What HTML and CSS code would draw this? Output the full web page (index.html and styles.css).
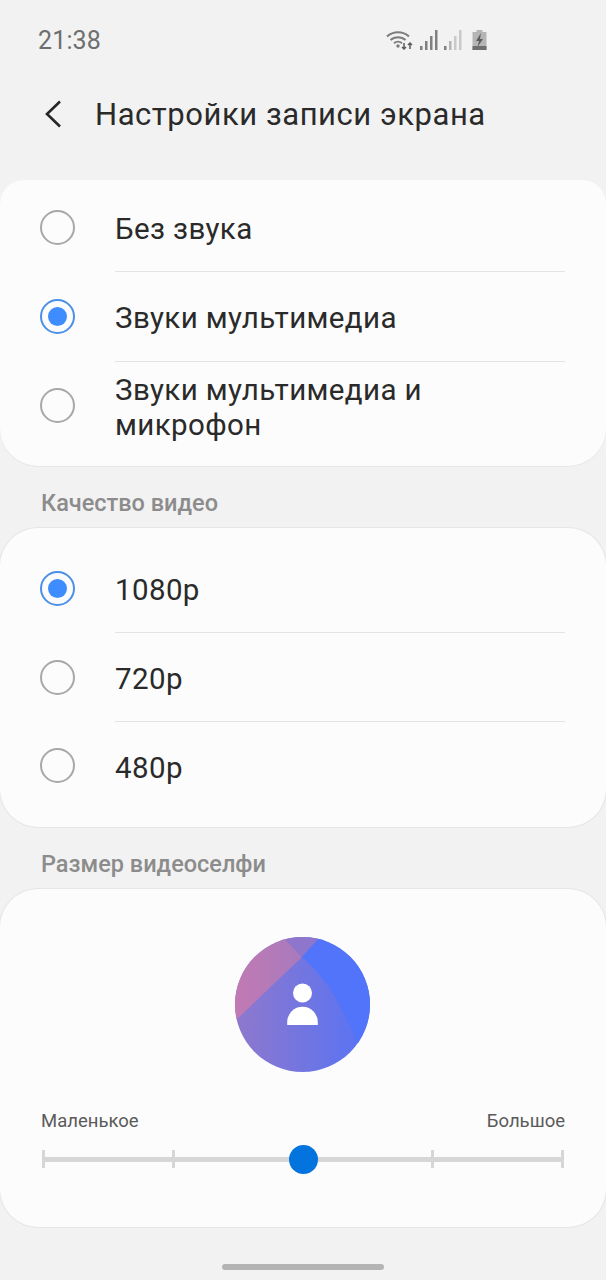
FILE: index.html
```html
<!DOCTYPE html>
<html lang="ru">
<head>
<meta charset="utf-8">
<title>Настройки записи экрана</title>
<link rel="stylesheet" href="styles.css">
</head>
<body>
<div class="status">
  <span class="time">21:38</span>
  <div class="status-icons">
    <svg class="i-wifi" width="28" height="20" viewBox="0 0 28 20" fill="none" stroke="#7d7d7d">
      <path d="M1 6.500C7 .8 17 .8 23 6.500" stroke-width="2"/>
      <path d="M4.500 10C8.500 6.300 15.500 6.300 19.500 10" stroke-width="2"/>
      <path d="M8 13.200C10.300 11.200 13.700 11.200 16 13.200" stroke-width="2"/>
      <circle cx="12" cy="16" r="1.700" fill="#7d7d7d" stroke="none"/>
      <path d="M18 13v6M16 17l2 2 2-2M24 19v-6M22 15l2-2 2 2" stroke="#5c5c5c" stroke-width="1.500"/>
    </svg>
    <svg class="i-sig" width="20" height="22" viewBox="0 0 20 22">
      <rect x="1" y="17" width="2.500" height="4" fill="#808080"/>
      <rect x="6" y="12" width="2.500" height="9" fill="#808080"/>
      <rect x="11" y="7" width="2.500" height="14" fill="#808080"/>
      <rect x="16" y="1" width="2.500" height="20" fill="#808080"/>
    </svg>
    <svg class="i-sig" width="20" height="22" viewBox="0 0 20 22">
      <rect x="1" y="17" width="2.500" height="4" fill="#808080"/>
      <rect x="6" y="12" width="2.500" height="9" fill="#b5b5b5"/>
      <rect x="11" y="7" width="2.500" height="14" fill="#c9c9c9"/>
      <rect x="16" y="1" width="2.500" height="20" fill="#c9c9c9"/>
    </svg>
    <svg class="i-bat" width="15" height="20" viewBox="0 0 15 20">
      <path d="M4.500 0h6v2h4v18H.500V2h4z" fill="#b5b5b5"/>
      <rect x=".5" y="16" width="14" height="4" fill="#6f6f6f"/>
      <path d="M9 3 4 11h3l-1.500 6L11 9H8z" fill="#5c5c5c"/>
    </svg>
  </div>
</div>
<header class="head">
  <svg class="back" width="18" height="28" viewBox="0 0 18 28" fill="none" stroke="#262626" stroke-width="2.600"><path d="M16 1.500 3 14l13 12.500"/></svg>
  <h1 class="title">Настройки записи экрана</h1>
</header>
<main class="content">
  <section class="card card-first">
    <div class="row row-a"><span class="radio"></span><span class="label">Без звука</span></div>
    <div class="row row-b"><span class="radio on"></span><span class="label">Звуки мультимедиа</span></div>
    <div class="row row-c"><span class="radio"></span><span class="label">Звуки мультимедиа и микрофон</span></div>
  </section>
  <h2 class="section">Качество видео</h2>
  <section class="card">
    <div class="row row-d"><span class="radio on"></span><span class="label">1080p</span></div>
    <div class="row row-b"><span class="radio"></span><span class="label">720p</span></div>
    <div class="row row-e"><span class="radio"></span><span class="label">480p</span></div>
  </section>
  <h2 class="section">Размер видеоселфи</h2>
  <section class="card selfie">
    <svg class="avatar" width="135" height="135" viewBox="0 0 135 135">
      <defs>
        <clipPath id="disc"><circle cx="67.500" cy="67.500" r="67.500"/></clipPath>
        <linearGradient id="base" x1="0" y1="0" x2="1" y2="0">
          <stop offset="0" stop-color="#8f78cc"/>
          <stop offset="1" stop-color="#5673f5"/>
        </linearGradient>
        <linearGradient id="pink" x1="0" y1="0" x2="1" y2="0">
          <stop offset="0" stop-color="#c27ab3"/>
          <stop offset="1" stop-color="#a87abd"/>
        </linearGradient>
      </defs>
      <g clip-path="url(#disc)">
        <rect width="135" height="135" fill="url(#base)"/>
        <path d="M0 84 67 20 48 0H0z" fill="url(#pink)"/>
        <path d="M48 0 67 20 85 0z" fill="#8d76cb"/>
        <path d="M85 0 67 20C91 41 108 70 121 103L135 125V0z" fill="#5274fb"/>
      </g>
      <circle cx="67.500" cy="56" r="9.500" fill="#fff"/>
      <path d="M52.200 88V85A15.300 15.300 0 0 1 82.800 85V88z" fill="#fff"/>
    </svg>
    <div class="size-labels"><span>Маленькое</span><span>Большое</span></div>
    <div class="slider">
      <span class="tick"></span><span class="tick"></span><span class="gap"></span><span class="tick"></span><span class="tick"></span>
      <span class="thumb"></span>
    </div>
  </section>
</main>
<div class="home-bar"></div>
</body>
</html>
```
FILE: styles.css
```css
* { box-sizing: border-box; }
html, body { margin: 0; padding: 0; }
body {
  width: 606px;
  height: 1280px;
  background: #f2f2f2;
  font-family: Roboto, "Noto Sans", sans-serif;
  color: #2a2a2a;
  overflow: hidden;
  display: flex;
  flex-direction: column;
}
.status {
  height: 80px;
  padding: 0 0 0 38px;
  display: flex;
  align-items: center;
  flex: none;
}
.time { font-size: 25px; color: #6e6e6e; letter-spacing: .15px; }
.status-icons {
  margin-left: 285px;
  display: flex;
  align-items: center;
  gap: 4px;
}
.i-wifi { margin-right: 1px; }
.i-bat { margin-left: 5px; }
.head {
  height: 100px;
  padding: 0 0 32px 44px;
  display: flex;
  align-items: center;
  gap: 33px;
  flex: none;
}
.back { flex: none; }
.title { margin: 0; font-size: 31px; font-weight: 400; color: #2a2a2a; letter-spacing: .55px; white-space: nowrap; }
.content { display: flex; flex-direction: column; }
.card {
  background: #fcfcfc;
  border-radius: 38px;
  box-shadow: 0 0 0 1px #e6e6e6;
}
.card-first { border-radius: 24px 24px 38px 38px; box-shadow: 0 1px 0 #e6e6e6; }
.section {
  margin: 0;
  height: 62px;
  padding: 23px 0 0 41px;
  font-size: 23.500px;
  line-height: 28px;
  font-weight: 500;
  color: #8c8c8c;
}
.row {
  display: flex;
  align-items: center;
  padding-left: 40px;
  position: relative;
}
.row + .row::before {
  content: "";
  position: absolute;
  top: 0;
  left: 115px;
  right: 41px;
  height: 1px;
  background: #e3e3e3;
}
.row-a { height: 91px; padding-top: 3px; }
.row-b { height: 89px; padding-top: 1px; }
.card-first .row-b { height: 90px; }
.row-c { height: 105px; padding-bottom: 17px; }
.row-d { height: 104px; padding-top: 16px; }
.row-e { height: 106px; padding-bottom: 17px; }
.radio {
  flex: none;
  width: 35px;
  height: 35px;
  border: 2px solid #a8a8a8;
  border-radius: 50%;
  margin-right: 40px;
  background: #fcfcfc;
  position: relative;
}
.radio.on { border-color: #4a90e8; }
.radio.on::after {
  content: "";
  position: absolute;
  inset: 6px;
  border-radius: 50%;
  background: #3f8cff;
}
.label {
  font-size: 29.500px;
  line-height: 35px;
  color: #2a2a2a;
  letter-spacing: .38px;
  width: 400px;
  padding-top: 5px;
}
.card-first .row-b .label { padding-top: 3px; }
.selfie {
  height: 338px;
  padding: 48px 42px 0;
  display: flex;
  flex-direction: column;
}
.avatar { align-self: center; flex: none; margin-left: -1px; }
.size-labels {
  margin: 38px -1px 0;
  display: flex;
  justify-content: space-between;
  font-size: 18.500px;
  line-height: 22px;
  color: #5a5a5a;
}
.slider {
  margin-top: 18px;
  height: 18px;
  position: relative;
  display: flex;
  justify-content: space-between;
  align-items: center;
  background: linear-gradient(#d6d6d6, #d6d6d6) center / 100% 5px no-repeat;
}
.tick { width: 3px; height: 18px; background: #d6d6d6; }
.gap { width: 3px; }
.thumb {
  position: absolute;
  left: 246.500px;
  top: -5.500px;
  width: 29px;
  height: 29px;
  border-radius: 50%;
  background: #0373dd;
}
.home-bar {
  position: absolute;
  left: 222px;
  top: 1264px;
  width: 162px;
  height: 6px;
  border-radius: 3px;
  background: #b4b4b4;
}
```
